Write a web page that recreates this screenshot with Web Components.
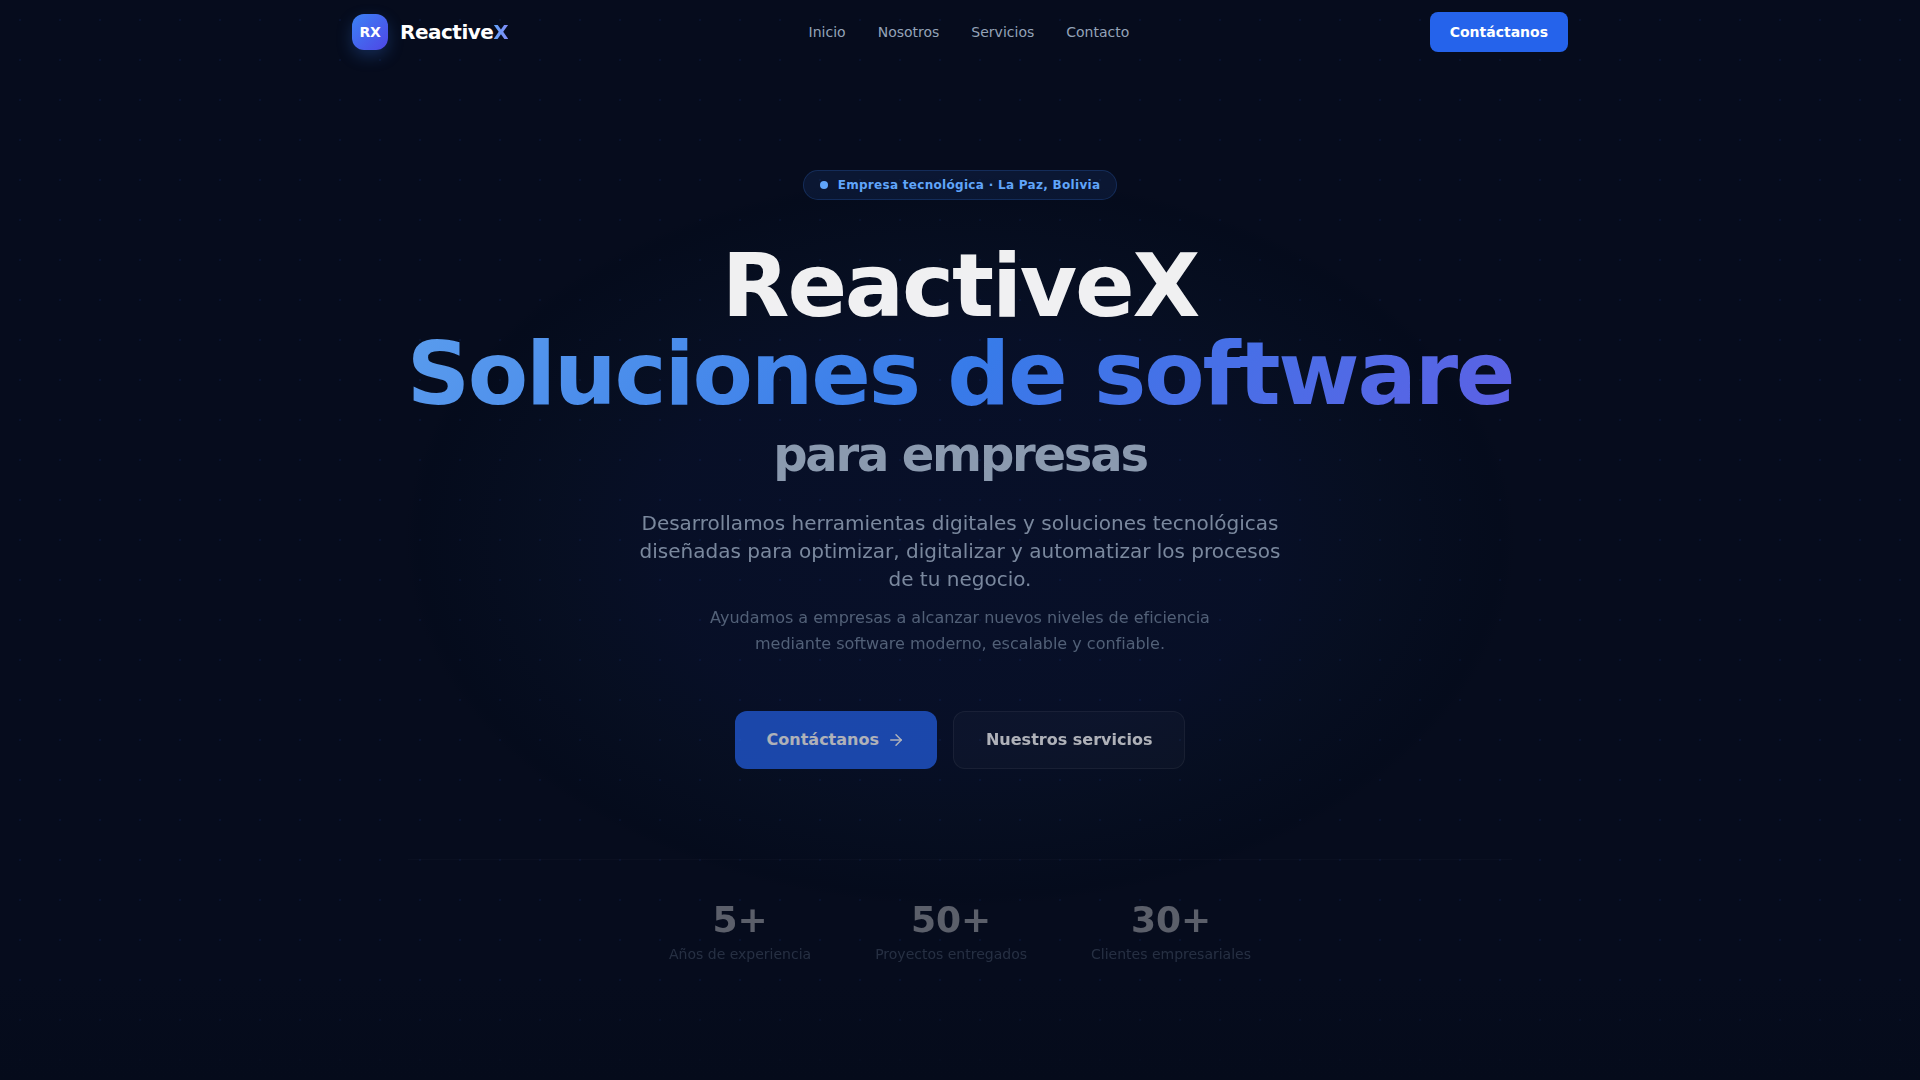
<!DOCTYPE html>
<html lang="es">
<head>
<meta charset="utf-8">
<title>ReactiveX – Soluciones de software</title>
<style>
  html, body { margin: 0; min-height: 100%; }
  body {
    background: #060c1d;
    color: #fff;
    font-family: "DejaVu Sans", sans-serif;
    font-size: 16px;
  }
</style>
</head>
<body>
<rx-page>
  <rx-header slot="header">
    <rx-brand slot="brand"></rx-brand>
    <rx-nav-link href="#inicio">Inicio</rx-nav-link>
    <rx-nav-link href="#nosotros">Nosotros</rx-nav-link>
    <rx-nav-link href="#servicios">Servicios</rx-nav-link>
    <rx-nav-link href="#contacto">Contacto</rx-nav-link>
    <rx-button slot="action" variant="small" href="#contacto">Contáctanos</rx-button>
  </rx-header>
  <rx-hero>
    <rx-badge slot="badge">Empresa tecnológica · La Paz, Bolivia</rx-badge>
    <span slot="title">ReactiveX</span>
    <span slot="accent">Soluciones de software</span>
    <span slot="tail">para empresas</span>
    <span slot="lead">Desarrollamos herramientas digitales y soluciones tecnológicas diseñadas para optimizar, digitalizar y automatizar los procesos de tu negocio.</span>
    <span slot="note">Ayudamos a empresas a alcanzar nuevos niveles de eficiencia mediante software moderno, escalable y confiable.</span>
    <rx-button slot="actions" variant="primary" href="#contacto" arrow>Contáctanos</rx-button>
    <rx-button slot="actions" variant="ghost" href="#servicios">Nuestros servicios</rx-button>
    <rx-stat slot="stats" value="5+">Años de experiencia</rx-stat>
    <rx-stat slot="stats" value="50+">Proyectos entregados</rx-stat>
    <rx-stat slot="stats" value="30+">Clientes empresariales</rx-stat>
  </rx-hero>
</rx-page>

<script>
  const define = (name, html) => {
    const template = document.createElement('template');
    template.innerHTML = html;
    customElements.define(name, class extends HTMLElement {
      constructor() {
        super();
        this.attachShadow({ mode: 'open' }).append(template.content.cloneNode(true));
      }
      connectedCallback() {
        const link = this.shadowRoot.querySelector('a[data-link]');
        if (link) link.href = this.getAttribute('href') || '#';
        const value = this.shadowRoot.querySelector('[data-value]');
        if (value) value.textContent = this.getAttribute('value');
      }
    });
  };

  define('rx-page', `
    <style>
      /* Layers, top to bottom: fade at the foot, central glow, dot grid */
      :host {
        display: flex; flex-direction: column; box-sizing: border-box; min-height: 100vh;
        background-image:
          linear-gradient(to top, #050b1b, transparent 100px),
          radial-gradient(ellipse 29% 34% at 50% 50%, rgba(40,80,235,.06), rgba(35,75,220,.05) 55%, rgba(20,70,130,.04) 75%, rgba(0,8,24,.2) 97%, transparent 100%),
          radial-gradient(circle, rgba(37,99,235,.08) 1px, transparent 1px);
        background-size: 100% 100%, 100% 100%, 40px 40px;
      }
      main { flex: 1; display: flex; flex-direction: column; }
    </style>
    <slot name="header"></slot>
    <main><slot></slot></main>`);

  define('rx-header', `
    <style>
      :host { display: block; }
      header {
        box-sizing: border-box; max-width: 1280px; height: 64px; margin: 0 auto; padding: 0 32px;
        display: flex; justify-content: space-between; align-items: center;
      }
      nav { display: flex; gap: 32px; }
    </style>
    <header>
      <slot name="brand"></slot>
      <nav aria-label="Principal"><slot></slot></nav>
      <slot name="action"></slot>
    </header>`);

  define('rx-brand', `
    <style>
      :host { display: block; }
      a { display: inline-flex; align-items: center; gap: 12px; color: #fff; text-decoration: none; }
      .mark {
        width: 36px; height: 36px; border-radius: 12px; display: grid; place-items: center;
        background: linear-gradient(135deg, #3b82f6, #4f46e5);
        box-shadow: 0 6px 16px rgba(59,130,246,.25);
        font-size: 14px; font-weight: 700; letter-spacing: -0.025em;
      }
      .name { font-size: 20px; line-height: 28px; font-weight: 700; letter-spacing: -0.025em; }
      .x { background: linear-gradient(90deg, #60a5fa, #818cf8); -webkit-background-clip: text; background-clip: text; color: transparent; }
    </style>
    <a href="#inicio"><span class="mark">RX</span><span class="name">Reactive<span class="x">X</span></span></a>`);

  define('rx-nav-link', `
    <style>
      :host { display: block; }
      a { display: block; color: #94a3b8; text-decoration: none; font-size: 14px; line-height: 20px; font-weight: 500; }
    </style>
    <a data-link><slot></slot></a>`);

  define('rx-button', `
    <style>
      :host { display: block; }
      a {
        box-sizing: border-box; display: flex; align-items: center; justify-content: center; gap: 8px;
        border: 1px solid transparent; border-radius: 12px; padding: 16px 32px;
        color: #fff; text-decoration: none; font-size: 16px; line-height: 24px; font-weight: 600;
      }
      svg { display: none; }
      :host([arrow]) svg { display: block; }
      :host([variant="small"]) a { border: 0; border-radius: 8px; padding: 10px 20px; font-size: 14px; line-height: 20px; background: #2563eb; }
      :host([variant="primary"]) a { border: 0; padding: 17px 32px; background: #2563eb; }
      :host([variant="ghost"]) a { background: rgba(255,255,255,.04); border-color: rgba(255,255,255,.08); }
    </style>
    <a data-link><slot></slot>
      <svg width="18" height="18" viewBox="0 0 24 24" fill="none" stroke="currentColor" stroke-width="2" stroke-linecap="round" stroke-linejoin="round" aria-hidden="true"><path d="M5 12h14"/><path d="m12 5 7 7-7 7"/></svg></a>`);

  define('rx-badge', `
    <style>
      :host {
        display: inline-flex; align-items: center; gap: 10px; padding: 6px 16px;
        border: 1px solid rgba(59,130,246,.2); border-radius: 999px; background: rgba(59,130,246,.1);
        color: #60a5fa; font-size: 12px; line-height: 16px; font-weight: 600; letter-spacing: 0.025em;
      }
      i { width: 8px; height: 8px; border-radius: 50%; background: #60a5fa; }
    </style>
    <i></i><span><slot></slot></span>`);

  define('rx-stat', `
    <style>
      :host { display: flex; flex-direction: column; gap: 4px; text-align: center; }
      strong { font-size: 36px; line-height: 40px; font-weight: 700; }
      span { color: #64748b; font-size: 14px; line-height: 20px; }
    </style>
    <strong data-value></strong><span><slot></slot></span>`);

  define('rx-hero', `
    <style>
      :host { display: block; }
      section {
        box-sizing: border-box; max-width: 1152px; margin: 0 auto; padding: 106px 24px 96px;
        display: flex; flex-direction: column; align-items: center; text-align: center;
      }
      h1 {
        margin: 42px 0 0; font-size: 88px; line-height: 88px; font-weight: 800;
        letter-spacing: -0.025em; opacity: .94; white-space: nowrap;
      }
      h1 span { display: block; }
      .accent {
        background: linear-gradient(135deg, #60a5fa 0%, #3b82f6 50%, #6366f1 100%);
        -webkit-background-clip: text; background-clip: text; color: transparent;
      }
      h1 .tail { margin-top: 12px; color: #94a3b8; font-size: 48px; line-height: 48px; font-weight: 700; }
      p { margin: 0; }
      .lead { margin-top: 31px; max-width: 672px; color: #94a3b8; font-size: 20px; line-height: 28px; opacity: .82; }
      .note { margin-top: 12px; max-width: 576px; color: #64748b; font-size: 16px; line-height: 26px; opacity: .8; }
      .actions { margin-top: 54px; display: flex; gap: 16px; opacity: .68; }
      .stats {
        align-self: stretch; margin-top: 90px; padding-top: 40px; border-top: 1px solid rgba(255,255,255,.06);
        display: flex; justify-content: center; gap: 64px; opacity: .34;
      }
    </style>
    <section>
      <slot name="badge"></slot>
      <h1>
        <span><slot name="title"></slot></span>
        <span class="accent"><slot name="accent"></slot></span>
        <span class="tail"><slot name="tail"></slot></span>
      </h1>
      <p class="lead"><slot name="lead"></slot></p>
      <p class="note"><slot name="note"></slot></p>
      <div class="actions"><slot name="actions"></slot></div>
      <div class="stats"><slot name="stats"></slot></div>
    </section>`);
</script>
</body>
</html>
